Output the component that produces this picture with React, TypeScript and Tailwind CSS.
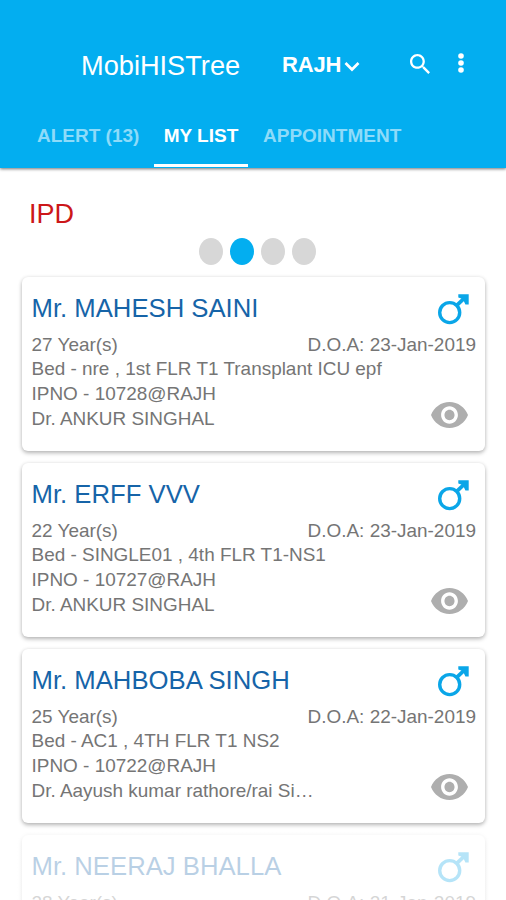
type Patient = {
  name: string;
  age: number;
  admitted: string;
  bed?: string;
  ipNo?: string;
  doctor?: string;
};

const patients: Patient[] = [
  {
    name: "Mr. MAHESH SAINI",
    age: 27,
    admitted: "23-Jan-2019",
    bed: "nre , 1st FLR T1 Transplant ICU epf",
    ipNo: "10728@RAJH",
    doctor: "Dr. ANKUR SINGHAL",
  },
  {
    name: "Mr. ERFF VVV",
    age: 22,
    admitted: "23-Jan-2019",
    bed: "SINGLE01 , 4th FLR T1-NS1",
    ipNo: "10727@RAJH",
    doctor: "Dr. ANKUR SINGHAL",
  },
  {
    name: "Mr. MAHBOBA SINGH",
    age: 25,
    admitted: "22-Jan-2019",
    bed: "AC1 , 4TH FLR T1 NS2",
    ipNo: "10722@RAJH",
    doctor: "Dr. Aayush kumar rathore/rai Si…",
  },
  {
    name: "Mr. NEERAJ BHALLA",
    age: 28,
    admitted: "21-Jan-2019",
  },
];

function MaleIcon() {
  return (
    <svg viewBox="0 0 32 32" className="h-8 w-8 shrink-0" fill="none" stroke="#0aa6e8">
      <circle cx="12.7" cy="19.6" r="10" strokeWidth="3.4" />
      <path d="M19 13.2 28.5 4" strokeWidth="3.8" />
      <path d="M21.3 1.200H31.7V11.600H28.4L27 8.600 24.300 5.600 21.300 4.400Z" fill="#0aa6e8" stroke="none" />
    </svg>
  );
}

function EyeIcon() {
  return (
    <svg viewBox="1 4.5 22 15" className="h-[26px] w-[37px]" fill="#aeaeae" preserveAspectRatio="none">
      <path d="M12 4.5C7 4.5 2.73 7.61 1 12c1.73 4.39 6 7.5 11 7.5s9.27-3.11 11-7.5c-1.73-4.39-6-7.5-11-7.5zM12 17c-2.76 0-5-2.24-5-5s2.24-5 5-5 5 2.24 5 5-2.24 5-5 5zm0-8c-1.66 0-3 1.34-3 3s1.34 3 3 3 3-1.34 3-3-1.34-3-3-3z" />
    </svg>
  );
}

function PatientCard({ patient }: { patient: Patient }) {
  return (
    <article className="h-[174px] shrink-0 rounded-md bg-white pl-[9.5px] pr-[9px] pt-[14px] shadow-[0_2px_4px_rgba(0,0,0,0.28),0_0_4px_rgba(0,0,0,0.06)]">
      <div className="flex h-9 items-center justify-between pr-[7px]">
        <h2 className="-mt-[2px] text-[25.7px] leading-9 text-[#1664a8]">{patient.name}</h2>
        <MaleIcon />
      </div>
      <div className="whitespace-nowrap pt-[6px] text-[18.95px] leading-6 text-[#757575]">
        <div className="flex justify-between">
          <span>{patient.age} Year(s)</span>
          <span>D.O.A: {patient.admitted}</span>
        </div>
        {patient.doctor && (
          <>
            <p>Bed - {patient.bed}</p>
            <p className="pt-px">IPNO - {patient.ipNo}</p>
            <div className="flex justify-between pr-2">
              <p className="pt-px">{patient.doctor}</p>
              <span className="-mt-1 h-[26px]">
                <EyeIcon />
              </span>
            </div>
          </>
        )}
      </div>
    </article>
  );
}

export default function App() {
  return (
    <div className="relative flex h-[900px] w-[506px] flex-col overflow-hidden bg-white font-['Liberation_Sans',Arial,sans-serif]">
      <header className="z-10 h-[168px] shrink-0 bg-[#03aef0] text-white shadow-[0_1px_3px_rgba(0,0,0,0.55)]">
        <div className="flex h-[104px] items-end pb-[22px] pl-[81px]">
          <h1 className="w-[201px] text-[27.2px] leading-8">MobiHISTree</h1>
          <button className="mb-[2px] flex h-8 w-[128px] items-center text-left text-[22px] font-bold">
            <span className="w-[62px] -tracking-[0.2px]">RAJH</span>
            <svg viewBox="0 0 16 12" className="mt-[6px] h-3 w-4" fill="none" stroke="currentColor" strokeWidth="2.7">
              <path d="m1.5 2 6.5 6.5L14.5 2" />
            </svg>
          </button>
          <svg viewBox="3 3 17.5 17.5" className="mb-[8px] h-5 w-5" fill="currentColor">
            <path d="M15.5 14h-.79l-.28-.27C15.41 12.59 16 11.11 16 9.5 16 5.91 13.09 3 9.5 3S3 5.91 3 9.5 5.91 16 9.5 16c1.61 0 3.09-.59 4.23-1.57l.27.28v.79l5 4.99L20.49 19l-4.99-5zm-6 0C7.01 14 5 11.99 5 9.5S7.01 5 9.5 5 14 7.01 14 9.5 11.99 14 9.5 14z" />
          </svg>
          <svg viewBox="0 0 6 20" className="mb-[9px] ml-[28px] h-5 w-[6px]" fill="currentColor">
            <circle cx="3" cy="3" r="2.8" />
            <circle cx="3" cy="10" r="2.8" />
            <circle cx="3" cy="17" r="2.8" />
          </svg>
        </div>
        <nav className="flex h-16 pl-[27px] text-[19px] font-bold leading-[63px] text-[#8edbf9]">
          <span className="w-[127px] pl-[10px]">ALERT (13)</span>
          <span className="h-[63px] w-[94px] border-b-[3px] border-white text-center text-white">MY LIST</span>
          <span className="pl-[15px]">APPOINTMENT</span>
        </nav>
      </header>

      <h2 className="mt-[30px] pl-[29px] text-[27px] leading-8 text-[#cc1719]">IPD</h2>

      <div className="mt-2 flex shrink-0 gap-[7px] pl-[199px]">
        <span className="h-[27px] w-6 rounded-[50%] bg-[#d7d7d7]" />
        <span className="h-[27px] w-6 rounded-[50%] bg-[#03aef0]" />
        <span className="h-[27px] w-6 rounded-[50%] bg-[#d7d7d7]" />
        <span className="h-[27px] w-6 rounded-[50%] bg-[#d7d7d7]" />
      </div>

      <main className="mt-3 flex flex-col gap-3 pl-[22px] pr-[21px]">
        {patients.map((patient) => (
          <PatientCard key={patient.name} patient={patient} />
        ))}
      </main>

      {/* list fades out toward the bottom edge */}
      <div className="absolute inset-x-0 bottom-0 h-[71px] bg-linear-to-b from-white/0 via-white/70 via-8% to-white/70" />
    </div>
  );
}
